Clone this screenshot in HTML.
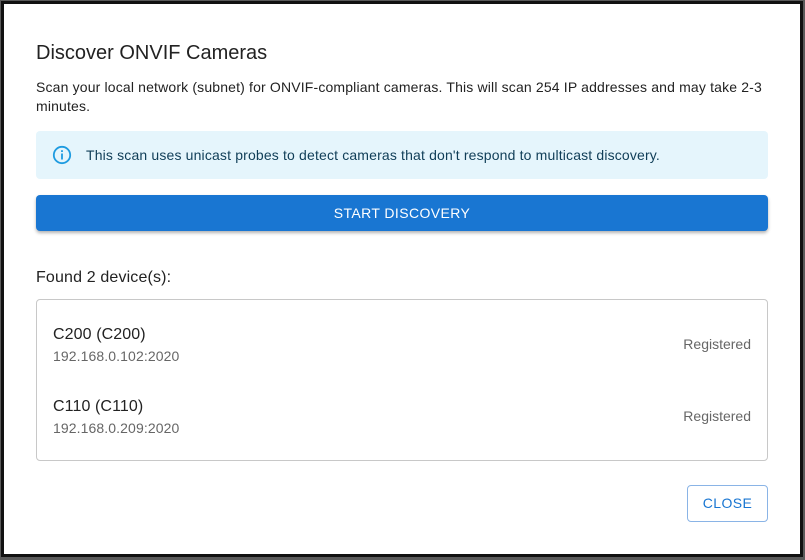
<!DOCTYPE html>
<html><head><style>
*{box-sizing:border-box;margin:0;padding:0}
body{width:805px;height:560px;background:#5a5a5a;font-family:"Liberation Sans",sans-serif;position:relative;overflow:hidden}
.dlg{position:absolute;left:1px;top:1px;width:802px;height:556px;background:#fff;border:3px solid #111}
.abs{position:absolute}
h2{position:absolute;left:32px;top:38px;font-size:20px;font-weight:400;color:#222}
.desc{left:32px;top:74px;width:740px;font-size:14px;line-height:19px;color:#222;letter-spacing:.16px}
.info{left:32px;top:127px;width:732px;height:48px;background:#e5f5fc;border-radius:4px}
.info span{position:absolute;left:50px;top:16px;font-size:14px;color:#0f3d57;letter-spacing:.16px}
.btn{left:32px;top:191px;width:732px;height:36px;background:#1976d2;border-radius:4px;box-shadow:0 2px 3px rgba(0,0,0,.3);color:#fff;font-size:14px;text-align:center;line-height:36px;letter-spacing:.4px}
.found{left:32px;top:265px;font-size:16px;color:#222;letter-spacing:.15px}
.list{left:32px;top:295px;width:732px;height:162px;border:1px solid #c8c8c8;border-radius:4px}
.nm{font-size:16px;color:#222;letter-spacing:.1px}
.ip{font-size:14px;color:#666;letter-spacing:.1px}
.reg{font-size:14px;color:#666}
.close{left:683px;top:481px;width:81px;height:37px;border:1px solid #8ab4e6;border-radius:4px;color:#1976d2;font-size:14px;text-align:center;line-height:35px;letter-spacing:.4px}
</style></head><body>
<div class="dlg">
<h2>Discover ONVIF Cameras</h2>
<div class="abs desc">Scan your local network (subnet) for ONVIF-compliant cameras. This will scan 254 IP addresses and may take 2-3 minutes.</div>
<div class="abs info"><svg class="abs" style="left:16px;top:14px" width="20" height="20" viewBox="0 0 20 20"><circle cx="10" cy="10" r="8.2" fill="none" stroke="#1e9be0" stroke-width="1.8"/><rect x="9.1" y="8.5" width="1.8" height="6" fill="#1e9be0"/><rect x="9.1" y="5.2" width="1.8" height="1.8" fill="#1e9be0"/></svg><span>This scan uses unicast probes to detect cameras that don't respond to multicast discovery.</span></div>
<div class="abs btn">START DISCOVERY</div>
<div class="abs found">Found 2 device(s):</div>
<div class="abs list">
<div class="abs nm" style="left:16px;top:26px">C200 (C200)</div>
<div class="abs ip" style="left:16px;top:48px">192.168.0.102:2020</div>
<div class="abs reg" style="right:16px;top:36px">Registered</div>
<div class="abs nm" style="left:16px;top:98px">C110 (C110)</div>
<div class="abs ip" style="left:16px;top:120px">192.168.0.209:2020</div>
<div class="abs reg" style="right:16px;top:108px">Registered</div>
</div>
<div class="abs close">CLOSE</div>
</div>
</body></html>
